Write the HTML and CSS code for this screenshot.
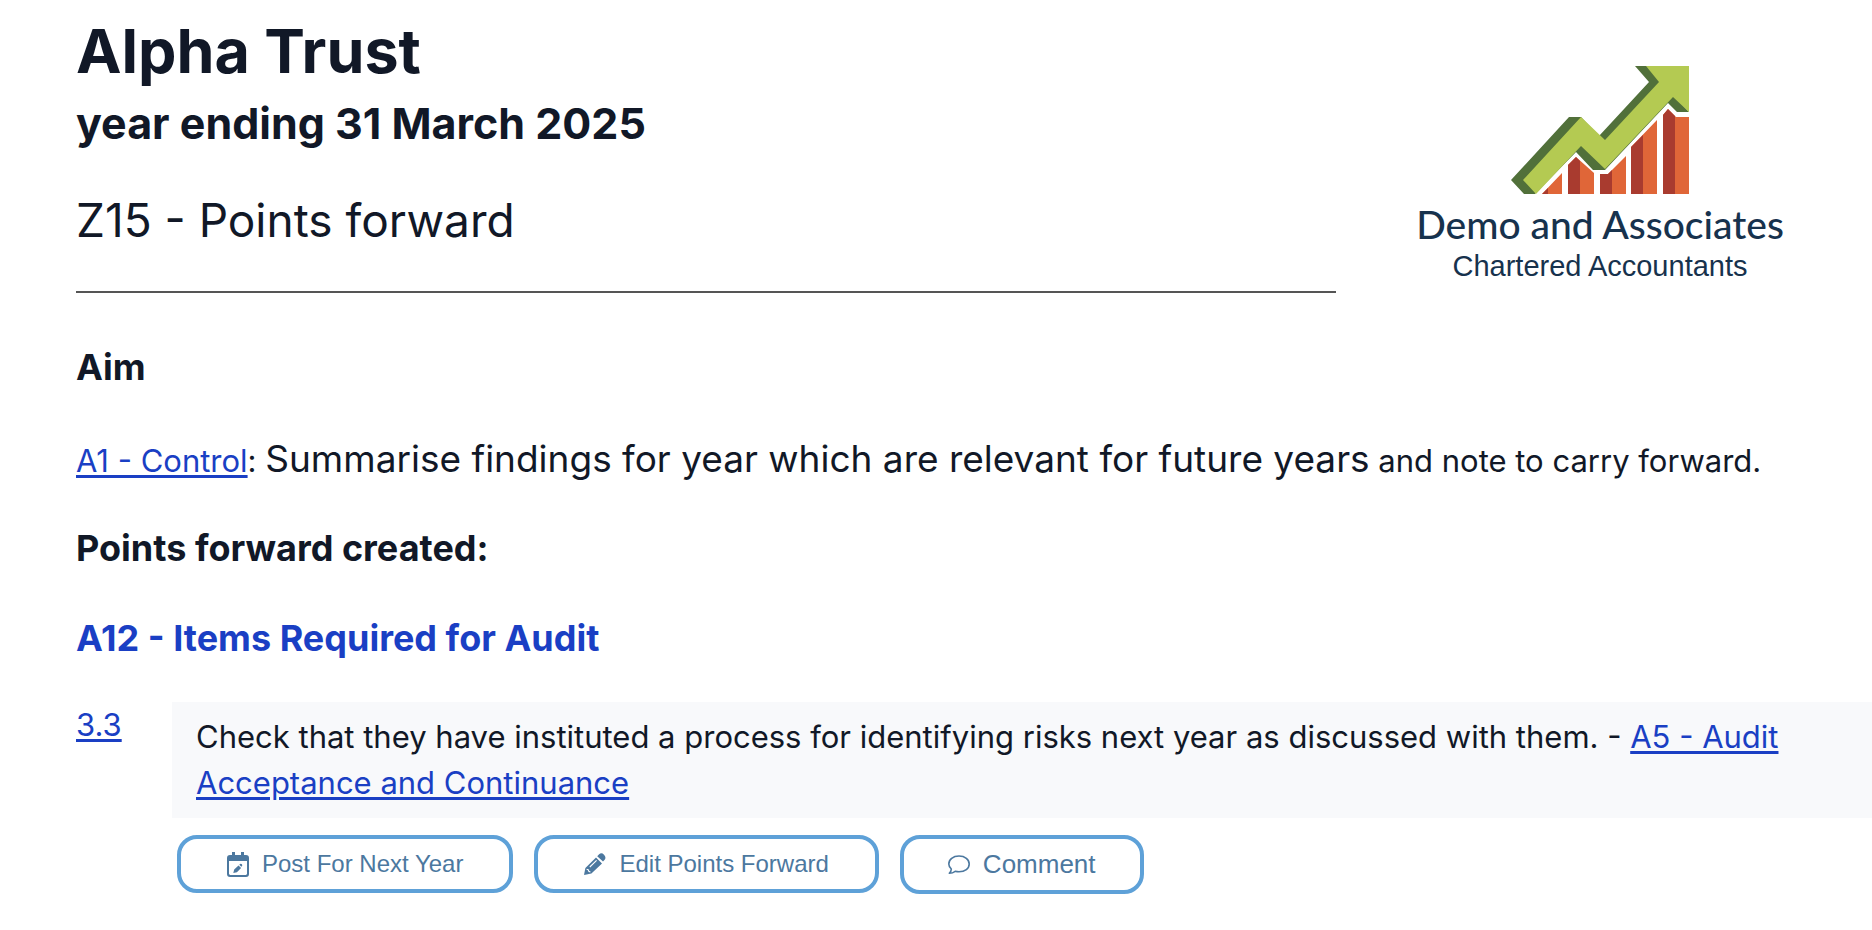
FILE: index.html
```html
<!DOCTYPE html>
<html lang="en">
<head>
<meta charset="utf-8">
<title>Alpha Trust - Points forward</title>
<link rel="stylesheet" href="styles.css">
</head>
<body>
<main class="page">
  <header class="header">
    <div class="heading">
      <h1 class="client">Alpha Trust</h1>
      <p class="period">year ending 31 March 2025</p>
      <p class="doc-title">Z15 - Points forward</p>
    </div>
    <div class="logo">
      <svg class="logo-mark" viewBox="0 0 178 128" aria-hidden="true">
        <g fill="#e06638">
          <path d="M31 128 51 107v21zM57 99l8-8 18 16v21H57zM89 108h8l18-18v38H89zM120 81l26-27v74h-26zM152 49l5-6 8 8h13v77h-26z"/>
        </g>
        <g fill="#a93b2f">
          <path d="M31 128l6-6v6zM57 99l8-8 4 4v33H57zM89 108h8l4-4v24H89zM120 81l12-12v59h-12zM152 49l5-6 7 7v78h-12z"/>
        </g>
        <path fill="#51703a" d="M0 114 58 51h12L88 70l50-54L124 0h12l42 46h-12l-9-9-63 67H82L65 86l-41 42H13z"/>
        <path fill="#b4ca52" d="M12 114 70 51l24 23 54-58L135 0h43v46l-16-15-68 72-24-23-45 48z"/>
      </svg>
      <p class="logo-name">Demo and Associates</p>
      <p class="logo-sub">Chartered Accountants</p>
    </div>
  </header>

  <h2 class="section-title">Aim</h2>
  <p class="aim"><a href="#a1">A1 - Control</a>: <span class="lead">Summarise findings for year which are relevant for future years</span> and note to carry forward.</p>
  <h2 class="section-title">Points forward created:</h2>
  <h2 class="section-title"><a class="title-link" href="#a12">A12 - Items Required for Audit</a></h2>

  <section class="point">
    <a class="point-ref" href="#p33">3.3</a>
    <div class="point-main">
      <p class="point-text">Check that they have instituted a process for identifying risks next year as discussed with them. - <a href="#a5">A5 - Audit Acceptance and Continuance</a></p>
      <div class="actions">
        <button class="action" type="button">
          <svg class="icon" viewBox="0 0 22 25" aria-hidden="true"><path fill="currentColor" fill-rule="evenodd" d="M5 0h3v3h6V0h3v3h2a3 3 0 0 1 3 3v16a3 3 0 0 1-3 3H3a3 3 0 0 1-3-3V6a3 3 0 0 1 3-3h2zM2 9v13l1 1h16l1-1V9z"/><path fill="currentColor" d="M6.300 21l.9-3.600 4.300-4 2.600 2.600-4.200 4.200zM12.300 12.700l.8-.7q1-.6 1.800.2t.1 1.900l-.7.700z"/></svg>
          Post For Next Year
        </button>
        <button class="action" type="button">
          <svg class="icon" viewBox="0 0 22 22" aria-hidden="true"><path fill="currentColor" d="M0 22l1.400-7L12 4.400l6 6L7.400 20.500zM13.200 3.200l1.900-1.900q2.400-2.200 4.900.4t.7 5l-1.700 1.900z"/><path fill="none" stroke="#fff" stroke-width="1.100" d="M5.800 14 12.600 7.400M2.600 16.300l1.600.4.6 1.600 1.600.6"/></svg>
          Edit Points Forward
        </button>
        <button class="action action-comment" type="button">
          <svg class="icon" viewBox="0 0 22 20" aria-hidden="true"><path fill="none" stroke="currentColor" stroke-width="1.600" stroke-linejoin="round" d="M1.300 18.300q2-2 2-4.300C1.700 12.500.8 11 .8 9 .8 4.400 5 1 11 1s10.200 3.400 10.200 8S17 16.800 11 16.800q-2 0-3.800-.5-2.600 2-5.900 2z"/></svg>
          Comment
        </button>
      </div>
    </div>
  </section>
</main>
</body>
</html>
```
FILE: styles.css
```css
* {
  box-sizing: border-box;
}

body {
  margin: 0;
  background: #fff;
  color: #111827;
  font-family: Inter, "Liberation Sans", sans-serif;
  font-size: 31px;
  line-height: 46px;
}

h1, h2, p {
  margin: 0;
}

a {
  color: #1a3fc4;
  text-decoration: underline;
  text-decoration-thickness: 3px;
  text-underline-offset: 3px;
}

.page {
  padding: 15px 0 32px 76px;
}

.header {
  display: flex;
  margin-bottom: 51px;
  padding-right: 86px;
}

.heading {
  flex: 1;
  border-bottom: 2px solid #555;
  padding-bottom: 42px;
}

.client {
  font-size: 61px;
  font-weight: 700;
  line-height: 72px;
}

.period {
  margin-top: 8px;
  font-size: 43px;
  font-weight: 700;
  line-height: 56px;
}

.doc-title {
  margin-top: 40px;
  font-size: 46px;
  line-height: 58px;
}

.logo {
  display: flex;
  flex: none;
  flex-direction: column;
  align-items: center;
  width: 372px;
  margin-left: 78px;
  padding-top: 51px;
  color: #17324d;
  white-space: nowrap;
}

.logo-mark {
  width: 178px;
  height: 128px;
}

.logo-name {
  margin-top: 6px;
  font-family: "Lato Medium", Lato, sans-serif;
  font-size: 39px;
  font-weight: 500;
  line-height: 48px;
}

.logo-sub {
  font-family: "Liberation Sans", sans-serif;
  font-size: 29px;
  line-height: 36px;
}

.section-title {
  margin-bottom: 44px;
  font-size: 36px;
  font-weight: 700;
  line-height: 46px;
}

.title-link {
  text-decoration: none;
}

.aim {
  margin: 46px 0 41px;
}

.lead {
  font-size: 37px;
}

.point {
  display: flex;
  margin-top: -3px;
}

.point-ref {
  width: 96px;
  flex: none;
}

.point-main {
  flex: 1;
}

.point-text {
  padding: 12px 24px;
  background: #f8f9fb;
}

.actions {
  display: flex;
  align-items: flex-start;
  gap: 21px;
  margin-top: 17px;
  padding-left: 5px;
}

.action {
  display: flex;
  align-items: center;
  gap: 13px;
  padding: 10px 46px;
  border: 4px solid #5ea1d8;
  border-radius: 20px;
  background: #fff;
  color: #4c789f;
  font-family: "Liberation Sans", Arial, sans-serif;
  font-size: 24px;
  line-height: 30px;
}

.action-comment {
  padding: 10px 44px;
  font-size: 26px;
  line-height: 31px;
}

.icon {
  width: 22px;
}
```
